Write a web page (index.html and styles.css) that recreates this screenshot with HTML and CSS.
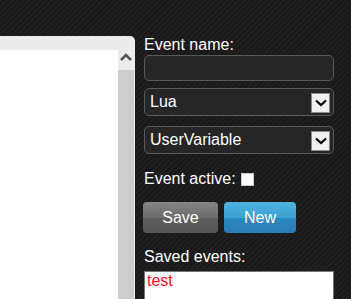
FILE: index.html
```html
<!DOCTYPE html>
<html lang="en">
<head>
    <meta charset="UTF-8">
    <title>Events</title>
    <link rel="stylesheet" href="styles.css">
</head>
<body>
    <div class="topbar"></div>
    <div class="main">
        <div class="editor">
            <div class="editor-head"></div>
            <div class="editor-body">
                <div class="code"></div>
                <div class="scroll">
                    <div class="scroll-up">
                        <svg width="12" height="8" viewBox="0 0 12 8"><path d="M1 7 L6 2 L11 7" fill="none" stroke="#555" stroke-width="2.6"/></svg>
                    </div>
                    <div class="scroll-track"></div>
                </div>
            </div>
        </div>
        <div class="side">
            <label class="lbl">Event name:</label>
            <input class="field" type="text">
            <div class="pick pick-first">
                <span>Lua</span>
                <span class="pick-btn"><svg width="12" height="8" viewBox="0 0 12 8"><path d="M1 1.5 L6 6 L11 1.5" fill="none" stroke="#000" stroke-width="2.2"/></svg></span>
            </div>
            <div class="pick pick-second">
                <span>UserVariable</span>
                <span class="pick-btn"><svg width="12" height="8" viewBox="0 0 12 8"><path d="M1 1.5 L6 6 L11 1.5" fill="none" stroke="#000" stroke-width="2.2"/></svg></span>
            </div>
            <div class="active-row">
                <span>Event active:</span>
                <span class="check"></span>
            </div>
            <div class="buttons">
                <button class="btn btn-save">Save</button>
                <button class="btn btn-new">New</button>
            </div>
            <label class="lbl lbl-saved">Saved events:</label>
            <div class="list">
                <div class="list-item">test</div>
            </div>
        </div>
    </div>
</body>
</html>
```
FILE: styles.css
```css
body {
    margin: 0;
    height: 299px;
    overflow: hidden;
    font-family: "Liberation Sans", Arial, sans-serif;
    font-size: 16px;
    color: #fff;
    background-color: #1b1b1b;
    background-image: repeating-linear-gradient(135deg, #1f1f1f 0 2px, #181818 2px 4px);
}
.topbar {
    height: 36px;
}
.main {
    display: flex;
    gap: 9px;
    align-items: flex-start;
}

/* editor on the left */
.editor {
    width: 135px;
    height: 263px;
    background: #ececec;
    border-top-right-radius: 5px;
    display: flex;
    flex-direction: column;
}
.editor-head {
    height: 14px;
    margin-right: 17px;
}
.editor-body {
    flex: 1;
    display: flex;
}
.code {
    width: 118px;
    background: #fff;
}
.scroll {
    width: 16px;
    margin-top: -14px;
    display: flex;
    flex-direction: column;
}
.scroll-up {
    height: 34px;
    display: flex;
    justify-content: center;
    padding-top: 17px;
    box-sizing: border-box;
}
.scroll-track {
    flex: 1;
    background: #cdcdcd;
}

/* form on the right */
.side {
    width: 190px;
    display: flex;
    flex-direction: column;
}
.lbl {
    line-height: 18px;
}
.field {
    margin-top: 1px;
    height: 26px;
    box-sizing: border-box;
    border: 1px solid #5a5a5a;
    border-radius: 5px;
    background: #262626;
    color: #fff;
}
.pick {
    height: 28px;
    box-sizing: border-box;
    border: 1px solid #5a5a5a;
    border-radius: 5px;
    background: #262626;
    display: flex;
    align-items: center;
    justify-content: space-between;
    padding: 0 3px 0 5px;
}
.pick-first {
    margin-top: 7px;
}
.pick-second {
    margin-top: 10px;
}
.pick-btn {
    width: 19px;
    height: 20px;
    box-sizing: border-box;
    border: 1px solid #8a8a8a;
    background: #f0f0f0;
    display: flex;
    align-items: center;
    justify-content: center;
    margin-top: 1px;
}
.active-row {
    margin-top: 16px;
    line-height: 18px;
    display: flex;
    align-items: center;
    gap: 5px;
}
.check {
    width: 11px;
    height: 11px;
    background: #fff;
    border: 1px solid #ccc;
}
.buttons {
    margin-top: 14px;
    display: flex;
    gap: 6px;
}
.btn {
    height: 31px;
    border: none;
    border-radius: 4px;
    font-family: "Liberation Sans", Arial, sans-serif;
    font-size: 16px;
    color: #fff;
    padding: 0;
}
.btn-save {
    width: 75px;
    margin-left: -1px;
    background: linear-gradient(#858585, #6c6c6c 50%, #5e5e5e 50%, #555);
}
.btn-new {
    width: 72px;
    background: linear-gradient(#4fb1dd, #3da1d2 50%, #2e88c2 50%, #2a7db6);
}
.lbl-saved {
    margin-top: 15px;
}
.list {
    margin-top: 5px;
    height: 40px;
    background: #fff;
    border: 1px solid #777;
}
.list-item {
    color: #ff0d1f;
    padding-left: 2px;
    line-height: 18px;
}
```
